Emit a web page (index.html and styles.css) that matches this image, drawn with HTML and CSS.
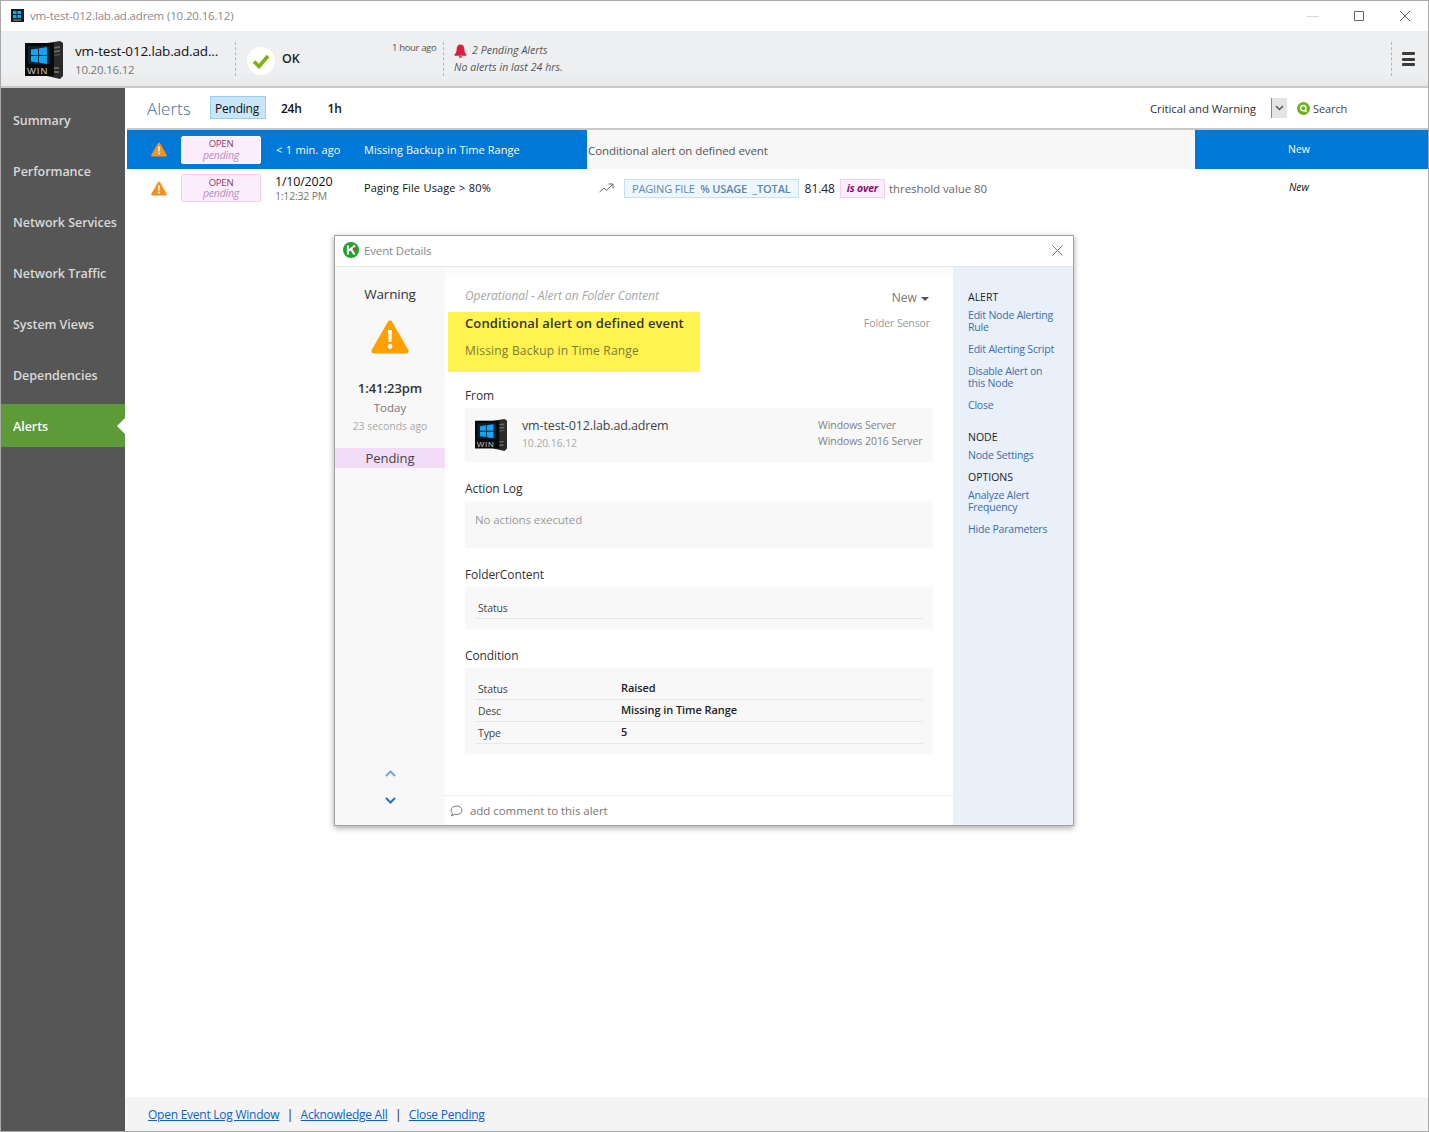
FILE: index.html
```html
<!DOCTYPE html>
<html>
  <head>
    <meta charset="utf-8">
    <title>vm-test-012.lab.ad.adrem</title>
    <link rel="stylesheet" href="styles.css">
  </head>
  <body>
    <svg class="defs" width="0" height="0">
      <symbol id="server" viewBox="0 0 38 38">
        <path d="M22 2L35 0l3 2v33l-3 3-13-3z" fill="#2a2a2a"/>
        <path d="M27 6l8-1v2l-8 1zM27 10l8-1v2l-8 1zM27 14l8-1v1l-8 1zM28 26h6v2h-6zM28 30h6v2h-6z" fill="#666"/>
        <rect x="0" y="2" width="29" height="33" fill="#0a0a0a"/>
        <rect x="3" y="5" width="22" height="18" fill="#0c1f33"/>
        <path d="M6 8.500l7-1V14H6zM14 7.300l8-1.200V14h-8zM6 15h7v6.500l-7-1zM14 15h8v7.900l-8-1.200z" fill="#12a5f4"/>
        <text x="2" y="33" font-size="9.500" fill="#c4c4c4" font-family="Liberation Sans" letter-spacing=".9">WIN</text>
      </symbol>
      <symbol id="warn" viewBox="0 0 38 34">
        <path d="M19 3L35 31H3z" fill="currentColor" stroke="currentColor" stroke-width="5" stroke-linejoin="round"/>
        <path d="M17 10h4l-.6 12h-2.800z" fill="#fff"/>
        <circle cx="19" cy="26.500" r="2.400" fill="#fff"/>
      </symbol>
    </svg>

    <div class="window">
      <div class="titlebar">
        <svg class="title-icon" width="13" height="13" viewBox="0 0 13 13">
          <rect width="13" height="13" fill="#1a1a1a"/>
          <path d="M2 2h3.500v3H2zM6.500 2H10v3H6.500zM2 6h3.500v3H2zM6.500 6H10v3H6.500z" fill="#12a5f4"/>
          <path d="M2 11h8" stroke="#999"/>
        </svg>
        <span class="title-text">vm-test-012.lab.ad.adrem (10.20.16.12)</span>
        <div class="win-btns">
          <svg width="12" height="12"><path d="M0 6.500h12" stroke="#d8d8d8"/></svg>
          <svg width="12" height="12"><path d="M1.500 1.500h9v9h-9z" fill="none" stroke="#666"/></svg>
          <svg width="12" height="12"><path d="M1 1l10 10M11 1L1 11" stroke="#666"/></svg>
        </div>
      </div>

      <div class="header">
        <svg class="node-icon" width="38" height="38"><use href="#server"/></svg>
        <div class="node-info">
          <div class="node-name">vm-test-012.lab.ad.ad...</div>
          <div class="node-ip">10.20.16.12</div>
        </div>
        <div class="ok-block">
          <span class="ok-circle">
            <svg width="18" height="16" viewBox="0 0 18 16"><path d="M2 8.500l5 5L16 3" fill="none" stroke="#84ad12" stroke-width="3.600"/></svg>
          </span>
          <span class="ok-text">OK</span>
        </div>
        <div class="ago">1 hour ago</div>
        <div class="alert-sum">
          <div class="pending-line">
            <svg width="13" height="14" viewBox="0 0 13 14"><path d="M6.500 0.500c-2.500 0-3.800 2-3.800 4.500 0 3-1.200 4.500-2.200 5.800v.9h12v-.9c-1-1.300-2.200-2.800-2.200-5.800 0-2.500-1.300-4.500-3.800-4.500zM4.800 12.300h3.400c0 1-.8 1.500-1.700 1.500s-1.700-.5-1.700-1.500z" fill="#dc1f3c"/></svg>
            <span>2 Pending Alerts</span>
          </div>
          <div>No alerts in last 24 hrs.</div>
        </div>
        <div class="menu-block">
          <span class="burger"><i></i><i></i><i></i></span>
        </div>
      </div>

      <div class="body">
        <nav class="sidebar">
          <a class="nav-item">Summary</a>
          <a class="nav-item">Performance</a>
          <a class="nav-item">Network Services</a>
          <a class="nav-item">Network Traffic</a>
          <a class="nav-item">System Views</a>
          <a class="nav-item">Dependencies</a>
          <a class="nav-item active">Alerts</a>
        </nav>

        <div class="main">
          <div class="toolbar">
            <span class="page-title">Alerts</span>
            <span class="tab selected">Pending</span>
            <span class="tab">24h</span>
            <span class="tab">1h</span>
            <span class="filter">Critical and Warning</span>
            <span class="filter-arrow">
              <svg width="9" height="6" viewBox="0 0 9 6"><path d="M1 1l3.500 3.500L8 1" fill="none" stroke="#555" stroke-width="1.500"/></svg>
            </span>
            <svg class="search-icon" width="13" height="13" viewBox="0 0 13 13">
              <circle cx="6.500" cy="6.500" r="6.500" fill="#6cb31f"/>
              <circle cx="6.300" cy="6.200" r="2.700" fill="none" stroke="#fff" stroke-width="1.300"/>
              <path d="M7.800 8l2 2" stroke="#fff" stroke-width="1.300"/>
            </svg>
            <span class="search-text">Search</span>
          </div>

          <div class="alert-row current">
            <svg class="row-warn" width="16" height="15"><use href="#warn"/></svg>
            <div class="badge"><span>OPEN</span><em>pending</em></div>
            <div class="row-time single">&lt; 1 min. ago</div>
            <div class="row-name">Missing Backup in Time Range</div>
            <div class="row-msg">Conditional alert on defined event</div>
            <div class="row-status">New</div>
          </div>

          <div class="alert-row">
            <svg class="row-warn" width="16" height="15"><use href="#warn"/></svg>
            <div class="badge"><span>OPEN</span><em>pending</em></div>
            <div class="row-time"><b>1/10/2020</b><small>1:12:32 PM</small></div>
            <div class="row-name wide">Paging File Usage &gt; 80%</div>
            <div class="row-msg">
              <svg class="trend" width="15" height="10" viewBox="0 0 15 10"><path d="M.5 9l4.500-4 2.500 2.500L13.500 1.500M9.500 1h4.500v4.500" fill="none" stroke="#666"/></svg>
              <span class="counter">PAGING FILE &nbsp;<b>% USAGE &nbsp;_TOTAL</b></span>
              <span class="value">81.48</span>
              <span class="is-over">is over</span>
              <span class="threshold">threshold value 80</span>
            </div>
            <div class="row-status">New</div>
          </div>

          <div class="spacer"></div>

          <div class="footer">
            <a>Open Event Log Window</a><span>|</span><a>Acknowledge All</a><span>|</span><a>Close Pending</a>
          </div>

          <div class="modal">
            <div class="modal-title">
              <svg width="16" height="16" viewBox="0 0 16 16">
                <circle cx="8" cy="8" r="8" fill="#1ea32e"/>
                <path d="M5 3.500v9M12 3.500L6 8.500M8 7l3.500 5.500" fill="none" stroke="#fff" stroke-width="2.200"/>
                <circle cx="11.300" cy="7" r="1.500" fill="#e2352b"/>
              </svg>
              <span>Event Details</span>
              <svg class="modal-close" width="11" height="11"><path d="M.5.500l10 10M10.500.500l-10 10" stroke="#777"/></svg>
            </div>
            <div class="modal-body">
              <div class="ev-left">
                <div class="ev-sev">Warning</div>
                <svg class="ev-warn" width="38" height="34"><use href="#warn"/></svg>
                <div class="ev-time">1:41:23pm</div>
                <div class="ev-day">Today</div>
                <div class="ev-ago">23 seconds ago</div>
                <div class="ev-state">Pending</div>
                <div class="ev-nav">
                  <svg width="11" height="7" viewBox="0 0 11 7"><path d="M1 6l4.500-4.500L10 6" fill="none" stroke="#7aa6cf" stroke-width="2"/></svg>
                  <svg width="11" height="7" viewBox="0 0 11 7"><path d="M1 1l4.500 4.500L10 1" fill="none" stroke="#2f73b3" stroke-width="2"/></svg>
                </div>
              </div>

              <div class="ev-mid">
                <div class="ev-scroll">
                  <div class="ev-head">
                    <div>
                      <div class="ev-type">Operational - Alert on Folder Content</div>
                      <div class="hilite">
                        <div class="hilite-title">Conditional alert on defined event</div>
                        <div class="hilite-sub">Missing Backup in Time Range</div>
                      </div>
                    </div>
                    <div class="ev-meta">
                      <div class="ev-new">New <i class="caret"></i></div>
                      <div class="ev-sensor">Folder Sensor</div>
                    </div>
                  </div>

                  <div class="sect-label first">From</div>
                  <div class="box from-box">
                    <svg width="32" height="32"><use href="#server"/></svg>
                    <div class="from-name">
                      <div>vm-test-012.lab.ad.adrem</div>
                      <small>10.20.16.12</small>
                    </div>
                    <div class="from-os">Windows Server<br>Windows 2016 Server</div>
                  </div>

                  <div class="sect-label">Action Log</div>
                  <div class="box log-box">No actions executed</div>

                  <div class="sect-label">FolderContent</div>
                  <div class="box param-box">
                    <div class="param"><span>Status</span><b></b></div>
                  </div>

                  <div class="sect-label">Condition</div>
                  <div class="box param-box">
                    <div class="param"><span>Status</span><b>Raised</b></div>
                    <div class="param"><span>Desc</span><b>Missing in Time Range</b></div>
                    <div class="param"><span>Type</span><b>5</b></div>
                  </div>
                </div>
                <div class="comment">
                  <svg width="13" height="12" viewBox="0 0 13 12"><path d="M6.800 1C3.500 1 1 2.800 1 5.200c0 1.300.7 2.300 1.600 3L1.500 11l3.200-1.800c.7.200 1.400.3 2.100.3 3 0 5.200-1.900 5.200-4.300S9.800 1 6.800 1z" fill="none" stroke="#666" stroke-width=".9"/></svg>
                  <span>add comment to this alert</span>
                </div>
              </div>

              <div class="ev-right">
                <h4>ALERT</h4>
                <a>Edit Node Alerting Rule</a>
                <a>Edit Alerting Script</a>
                <a>Disable Alert on this Node</a>
                <a>Close</a>
                <h4 class="node-h">NODE</h4>
                <a>Node Settings</a>
                <h4 class="opt-h">OPTIONS</h4>
                <a>Analyze Alert Frequency</a>
                <a>Hide Parameters</a>
              </div>
            </div>
          </div>
        </div>
      </div>
    </div>
  </body>
</html>
```

FILE: styles.css
```css
* {
  box-sizing: border-box;
}
html, body {
  margin: 0;
  padding: 0;
}
body {
  font-family: "Open Sans", "Noto Sans", sans-serif;
  font-size: 12px;
  color: #333;
  background: #fff;
}
.defs {
  position: absolute;
}
.window {
  width: 1429px;
  height: 1132px;
  border: 1px solid #a8a8a8;
  display: flex;
  flex-direction: column;
  overflow: hidden;
}

/* title bar */
.titlebar {
  height: 30px;
  display: flex;
  align-items: center;
  padding-left: 10px;
  padding-bottom: 1px;
  flex: none;
}
.title-text {
  margin-left: 6px;
  font-size: 11.500px;
  color: #8a8a8a;
  letter-spacing: -.15px;
}
.win-btns {
  margin-left: auto;
  display: flex;
  gap: 34px;
  padding-right: 17px;
}

/* node header */
.header {
  height: 57px;
  flex: none;
  display: flex;
  align-items: stretch;
  background: linear-gradient(#eeeff1 75%, #e9e9e9);
  border-bottom: 2px solid #c8c8c8;
}
.node-icon {
  margin: 10px 0 0 24px;
}
.node-info {
  margin-left: 12px;
  width: 160px;
  padding-top: 11px;
}
.node-name {
  font-size: 13.500px;
  line-height: 18px;
  color: #111;
  white-space: nowrap;
  letter-spacing: -.15px;
}
.node-ip {
  font-size: 11.500px;
  line-height: 19px;
  color: #777;
  letter-spacing: -.2px;
}
.ok-block {
  margin: 11px 0 0;
  height: 34px;
  padding-left: 11px;
  border-left: 1px dashed #b5b5b5;
  display: flex;
  align-items: center;
  width: 157px;
}
.ok-circle {
  width: 28px;
  height: 28px;
  margin-top: 4px;
  border-radius: 50%;
  background: #fff;
  display: flex;
  align-items: center;
  justify-content: center;
}
.ok-text {
  margin: -2px 0 0 7px;
  font-size: 12.500px;
  font-weight: 600;
  color: #222;
}
.ago {
  padding-top: 10px;
  width: 44px;
  font-size: 9.500px;
  line-height: 14px;
  color: #555;
  white-space: nowrap;
  letter-spacing: -.35px;
}
.alert-sum {
  margin: 11px 0 0 7px;
  height: 34px;
  padding: 0 0 0 10px;
  border-left: 1px dashed #b5b5b5;
  font-style: italic;
  font-size: 10.500px;
  line-height: 17px;
  color: #555;
  letter-spacing: .07px;
}
.pending-line {
  display: flex;
  align-items: center;
  gap: 5px;
}
.menu-block {
  margin: 11px 0 0 auto;
  width: 37px;
  height: 34px;
  border-left: 1px dashed #b5b5b5;
  display: flex;
  align-items: center;
  padding-left: 10px;
}
.burger {
  display: flex;
  flex-direction: column;
  gap: 2.500px;
}
.burger i {
  display: block;
  width: 13px;
  height: 3px;
  border-radius: 1px;
  background: #3c3c3c;
}

/* body */
.body {
  flex: 1;
  display: flex;
  min-height: 0;
}
.sidebar {
  width: 124px;
  flex: none;
  background: #565656;
  padding-top: 10px;
  display: flex;
  flex-direction: column;
  gap: 8px;
}
.nav-item {
  height: 43px;
  line-height: 45px;
  padding-left: 12px;
  color: #d9d9d9;
  font-size: 12.500px;
  font-weight: 600;
  white-space: nowrap;
  letter-spacing: -.05px;
}
.nav-item.active {
  position: relative;
  background: #5e9a38;
  color: #fff;
}
.nav-item.active::after {
  content: "";
  position: absolute;
  right: 0;
  top: 14px;
  border: 8px solid transparent;
  border-left-width: 0;
  border-right-color: #fff;
}

.main {
  flex: 1;
  position: relative;
  display: flex;
  flex-direction: column;
  padding-left: 2px;
  min-width: 0;
}
.toolbar {
  height: 42px;
  flex: none;
  display: flex;
  align-items: center;
  border-bottom: 2px solid #c8c8c8;
  padding-left: 20px;
  padding-bottom: 2px;
}
.page-title {
  margin-top: 2px;
  font-size: 17px;
  font-weight: 300;
  color: #3d6f98;
  width: 63px;
}
.tab {
  margin-top: 2px;
  font-size: 12px;
  font-weight: 600;
  color: #111;
  margin-right: 26px;
  letter-spacing: -.25px;
}
.tab.selected {
  margin-top: 0;
  height: 23px;
  line-height: 23px;
  width: 56px;
  padding-right: 2px;
  text-align: center;
  background: #c8e6f8;
  border: 1px solid #93cfee;
  font-weight: 400;
  margin-right: 15px;
}
.filter {
  margin-top: 2px;
  margin-left: auto;
  font-size: 11.500px;
  color: #333;
  letter-spacing: -.1px;
}
.filter-arrow {
  margin-left: 15px;
  margin-top: 1px;
  width: 16px;
  height: 20px;
  background: #e4e4e4;
  border-left: 1px solid #888;
  display: flex;
  align-items: center;
  justify-content: center;
}
.search-icon {
  margin-left: 10px;
  margin-top: 3px;
}
.search-text {
  margin-top: 2px;
  margin-left: 3px;
  width: 115px;
  font-size: 11px;
  color: #444;
  letter-spacing: -.1px;
}

/* alert rows */
.alert-row {
  height: 39px;
  flex: none;
  display: flex;
  align-items: center;
  color: #111;
}
.alert-row + .alert-row {
  height: 38px;
}
.alert-row.current {
  background: #0078d7;
  color: #fff;
}
.row-warn {
  margin-left: 24px;
  margin-right: 14px;
  flex: none;
  color: #f5921e;
}
.badge {
  width: 80px;
  height: 28px;
  flex: none;
  background: #fdeefd;
  border: 1px solid #f4cdef;
  border-radius: 2px;
  display: flex;
  flex-direction: column;
  align-items: center;
  justify-content: center;
  font-size: 9.500px;
  line-height: 10.500px;
  color: #8c3a6d;
  letter-spacing: -.2px;
}
.current .badge {
  border-color: #fff;
}
.badge em {
  color: #b58cc4;
  font-size: 10.500px;
}
.row-time {
  width: 103px;
  padding-left: 15px;
  flex: none;
  font-size: 10.500px;
}
.row-time.single {
  font-size: 11px;
  word-spacing: .6px;
}
.row-time b {
  display: block;
  margin-left: -1px;
  font-weight: 400;
  font-size: 12.500px;
  line-height: 15px;
  letter-spacing: -.2px;
}
.row-time small {
  display: block;
  margin-left: -1px;
  font-size: 10.500px;
  line-height: 14px;
  color: #777;
  letter-spacing: -.2px;
}
.row-name {
  width: 223px;
  flex: none;
  font-size: 11px;
  letter-spacing: .05px;
}
.row-name.wide {
  margin-top: -2px;
  word-spacing: .5px;
  letter-spacing: .1px;
}
.row-msg {
  width: 608px;
  height: 100%;
  flex: none;
  display: flex;
  align-items: center;
  padding-left: 1px;
  padding-top: 2px;
  color: #555;
  font-size: 11.500px;
  letter-spacing: -.08px;
}
.alert-row + .alert-row .row-msg {
  padding-top: 0;
}
.current .row-msg {
  background: #f7f7f7;
}
.row-status {
  width: 232px;
  height: 100%;
  flex: none;
  padding: 0 24px 2px 0;
  display: flex;
  align-items: center;
  justify-content: center;
  font-size: 10.500px;
  font-style: italic;
}
.current .row-status {
  font-style: normal;
}
.trend {
  margin: 0 10px 0 11px;
}
.counter {
  height: 19px;
  line-height: 18px;
  padding: 0 7px;
  background: #eff7fd;
  border: 1px solid #c6dff2;
  color: #5d87ad;
  font-size: 11px;
  white-space: nowrap;
  letter-spacing: -.15px;
}
.counter b {
  font-weight: 600;
}
.value {
  margin: 0 5px 0 6px;
  color: #222;
  font-size: 12px;
}
.is-over {
  height: 19px;
  line-height: 17px;
  padding: 0 6px;
  background: #fdeefd;
  border: 1px solid #f4cdef;
  color: #8f0f6a;
  font-size: 10.500px;
  font-style: italic;
  font-weight: 700;
  letter-spacing: -.2px;
}
.threshold {
  margin-left: 4px;
  color: #666;
  font-size: 11.500px;
}
.spacer {
  flex: 1;
}
.footer {
  margin-left: -2px;
  height: 34px;
  flex: none;
  background: #f4f4f4;
  padding-left: 23px;
  display: flex;
  align-items: center;
  font-size: 12px;
  letter-spacing: -.25px;
  color: #111;
}
.footer a {
  color: #0d62c9;
  text-decoration: underline;
}
.footer span {
  margin: 0 7.500px;
}

/* event details dialog */
.modal {
  position: absolute;
  left: 209px;
  top: 147px;
  width: 740px;
  height: 591px;
  background: #fff;
  border: 1px solid #a2a2a2;
  box-shadow: 0 2px 6px rgba(0, 0, 0, .35);
  display: flex;
  flex-direction: column;
}
.modal-title {
  height: 31px;
  flex: none;
  display: flex;
  align-items: center;
  gap: 5px;
  padding: 0 10px 2px 8px;
  border-bottom: 1px solid #e6e6e6;
  color: #8a8a8a;
  font-size: 11.500px;
  letter-spacing: -.15px;
}
.modal-close {
  margin-left: auto;
}
.modal-body {
  flex: 1;
  display: flex;
  min-height: 0;
}
.ev-left {
  width: 110px;
  flex: none;
  background: #f8f8f8;
  display: flex;
  flex-direction: column;
  align-items: center;
  padding-top: 17px;
}
.ev-sev {
  font-size: 13.500px;
  line-height: 20px;
  color: #333;
  letter-spacing: -.2px;
}
.ev-warn {
  margin-top: 16px;
  color: #ffa000;
}
.ev-time {
  margin-top: 24px;
  font-size: 13px;
  font-weight: 600;
  line-height: 20px;
  letter-spacing: -.05px;
}
.ev-day {
  font-size: 11.500px;
  line-height: 20px;
  color: #777;
}
.ev-ago {
  font-size: 10.500px;
  line-height: 16px;
  color: #aaa;
  letter-spacing: -.05px;
}
.ev-state {
  margin-top: 14px;
  width: 100%;
  height: 20px;
  line-height: 20px;
  text-align: center;
  background: #f2dcf7;
  font-size: 13px;
  color: #444;
  letter-spacing: -.05px;
}
.ev-nav {
  margin-top: auto;
  margin-bottom: 21px;
  display: flex;
  flex-direction: column;
  justify-content: space-between;
  align-items: center;
  height: 34px;
}
.ev-mid {
  flex: 1;
  min-width: 0;
  display: flex;
  flex-direction: column;
}
.ev-scroll {
  flex: 1;
  background: linear-gradient(#fafafa, #fff 12px);
  padding-top: 20px;
}
.ev-head {
  display: flex;
  justify-content: space-between;
}
.ev-type {
  padding-left: 20px;
  height: 25px;
  font-size: 12px;
  font-style: italic;
  color: #a5a5a5;
  letter-spacing: -.05px;
  white-space: nowrap;
}
.hilite {
  margin-left: 3px;
  width: 252px;
  height: 60px;
  padding: 1px 0 0 17px;
  background: #fff350;
}
.hilite-title {
  font-size: 13px;
  font-weight: 600;
  line-height: 20px;
  color: #333;
  letter-spacing: .13px;
  white-space: nowrap;
}
.hilite-sub {
  margin-top: 8px;
  font-size: 12px;
  line-height: 20px;
  color: #7a7a3a;
  letter-spacing: .2px;
}
.ev-meta {
  padding-right: 24px;
  text-align: right;
}
.ev-new {
  height: 25px;
  padding-top: 2px;
  font-size: 12px;
  color: #777;
}
.caret {
  display: inline-block;
  margin-left: 1px;
  vertical-align: middle;
  border: 4.500px solid transparent;
  border-top-color: #555;
  border-bottom-width: 0;
}
.ev-sensor {
  margin-top: 4px;
  margin-right: -1px;
  font-size: 10.500px;
  color: #999;
  letter-spacing: -.1px;
}
.sect-label {
  margin: 18px 0 0 20px;
  height: 21px;
  line-height: 18px;
  font-size: 12px;
  color: #333;
  letter-spacing: -.1px;
}
.sect-label.first {
  margin-top: 14px;
  height: 22px;
  line-height: 19px;
}
.box {
  margin: 0 20px;
  background: #f8f8f8;
}
.from-box {
  height: 54px;
  display: flex;
  align-items: center;
  padding: 0 9px 0 10px;
}
.from-name {
  margin-left: 15px;
  padding-bottom: 3px;
  font-size: 12.500px;
  line-height: 18px;
  color: #444;
  letter-spacing: -.13px;
}
.from-name small {
  display: block;
  font-size: 10.500px;
  line-height: 16px;
  color: #aaa;
}
.from-os {
  margin-left: auto;
  width: 106px;
  padding-bottom: 4px;
  font-size: 10.500px;
  line-height: 16px;
  color: #808080;
  letter-spacing: -.05px;
  white-space: nowrap;
}
.log-box {
  height: 47px;
  padding: 11px 10px;
  color: #999;
  font-size: 11.500px;
  letter-spacing: -.1px;
}
.param-box {
  padding: 10px 10px;
}
.param {
  height: 22px;
  display: flex;
  align-items: center;
  border-bottom: 1px solid #e8e8e8;
  padding: 0 0 1px 3px;
  font-size: 10.500px;
  color: #444;
  letter-spacing: -.15px;
}
.param span {
  width: 143px;
  flex: none;
  padding-top: 2px;
}
.param b {
  margin-bottom: 2px;
  font-size: 11px;
  font-weight: 600;
  color: #222;
  letter-spacing: -.08px;
}
.comment {
  height: 30px;
  flex: none;
  display: flex;
  align-items: center;
  gap: 7px;
  padding-left: 5px;
  border-top: 1px solid #eaeaea;
  color: #777;
  font-size: 11.500px;
  letter-spacing: -.05px;
}
.ev-right {
  width: 120px;
  flex: none;
  background: #e9f0f9;
  padding: 24px 14px 0 15px;
}
.ev-right h4 {
  margin: 0;
  font-size: 10.500px;
  font-weight: 400;
  line-height: 12px;
  color: #222;
}
.ev-right a {
  display: block;
  margin: 0 0 10px;
  font-size: 10.500px;
  line-height: 12px;
  color: #3a6ea5;
  letter-spacing: -.2px;
}
.ev-right h4 + a {
  margin-top: 6px;
}
.ev-right .node-h {
  margin-top: 20px;
}
.ev-right .opt-h {
  margin-top: 4px;
}
```
